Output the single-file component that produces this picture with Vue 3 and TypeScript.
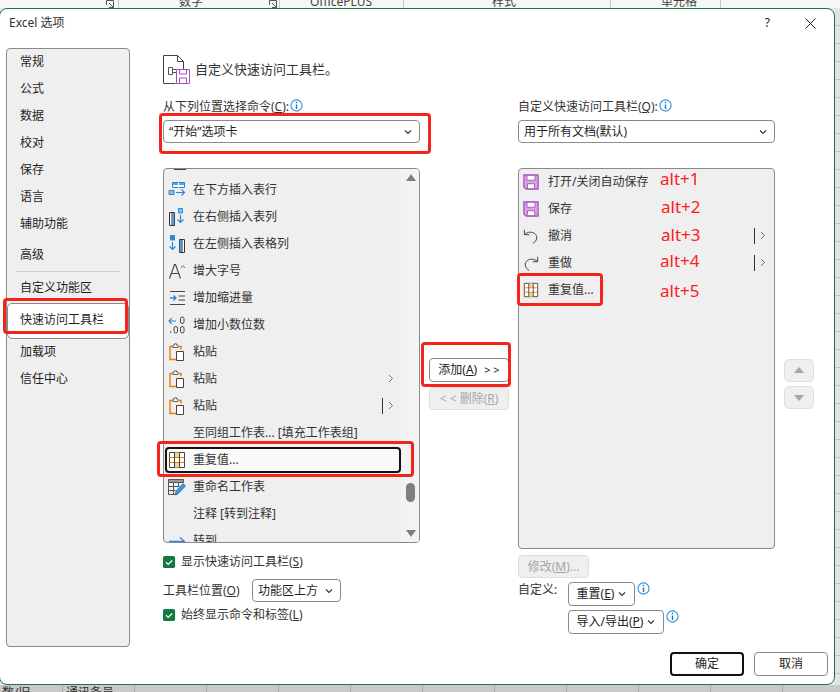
<script setup lang="ts">
interface Row { label: string; icon?: string; more?: 'plain' | 'split'; selected?: boolean }

const navTop = ['常规', '公式', '数据', '校对', '保存', '语言', '辅助功能']

const commands: Row[] = [
  { label: '在下方插入表行', icon: 'i-row' },
  { label: '在右侧插入表列', icon: 'i-colr' },
  { label: '在左侧插入表格列', icon: 'i-coll' },
  { label: '增大字号', icon: 'i-font' },
  { label: '增加缩进量', icon: 'i-indent' },
  { label: '增加小数位数', icon: 'i-dec' },
  { label: '粘贴', icon: 'i-paste' },
  { label: '粘贴', icon: 'i-paste', more: 'plain' },
  { label: '粘贴', icon: 'i-paste', more: 'split' },
  { label: '至同组工作表... [填充工作表组]' },
  { label: '重复值...', icon: 'i-dup', selected: true },
  { label: '重命名工作表', icon: 'i-rename' },
  { label: '注释 [转到注释]' },
  { label: '转到', icon: 'i-goto' },
]

const quick: Row[] = [
  { label: '打开/关闭自动保存', icon: 'i-save' },
  { label: '保存', icon: 'i-save' },
  { label: '撤消', icon: 'i-undo', more: 'split' },
  { label: '重做', icon: 'i-redo', more: 'split' },
  { label: '重复值...', icon: 'i-dup' },
]

const notes = [
  { text: 'alt+1', x: 660, y: 168 },
  { text: 'alt+2', x: 661, y: 196 },
  { text: 'alt+3', x: 661, y: 224 },
  { text: 'alt+4', x: 660, y: 250 },
  { text: 'alt+5', x: 660, y: 280 },
]
const marks = [
  { x: 159, y: 113, w: 272, h: 41 },
  { x: 3, y: 298, w: 125, h: 36 },
  { x: 421, y: 342, w: 90, h: 45 },
  { x: 157, y: 441, w: 257, h: 36 },
  { x: 517, y: 273, w: 86, h: 33 },
]
const gridLines = [118, 279, 403, 610, 720]
const launchers = [106, 269]
const bottomLines = [62, 134, 206, 278, 350, 422, 494, 566, 638, 710, 782]
</script>

<template>
  <div class="page">
    <svg class="defs" width="0" height="0" aria-hidden="true">
      <defs>
        <symbol id="i-row" viewBox="0 0 18 18">
          <path d="M4.500 1.500h12v5h-12z" fill="#fff" stroke="#2b88d8"/>
          <path d="M4.500 1.500h12v2.500h-12z" fill="#2b88d8" opacity=".75"/>
          <path d="M10.500 1.500v5" stroke="#fff"/>
          <path d="M1 9.500h5v4h-5z" fill="#8cc0ea" stroke="#2b88d8"/>
          <path d="M8 11.500h8M13.500 8.500l3 3-3 3" fill="none" stroke="#2b88d8" stroke-width="1.200"/>
        </symbol>
        <symbol id="i-colr" viewBox="0 0 18 18">
          <path d="M1.500 4.500h5v13h-5zM4 4.500v13" fill="#fff" stroke="#333"/>
          <path d="M4.500 5h2v12h-2z" fill="#2b88d8" opacity=".8"/>
          <path d="M10.500.5h4v4.500h-4z" fill="#8cc0ea" stroke="#2b88d8"/>
          <path d="M12.500 7v7.500M9.500 11.500l3 3 3-3" fill="none" stroke="#2b88d8" stroke-width="1.200"/>
        </symbol>
        <symbol id="i-coll" viewBox="0 0 18 18">
          <path d="M11.500 4.500h5v13h-5zM14 4.500v13" fill="#fff" stroke="#333"/>
          <path d="M11.500 5h2.500v12h-2.500z" fill="#2b88d8" opacity=".8"/>
          <path d="M2.500.5h4v4.500h-4z" fill="#2b88d8" stroke="#2b88d8"/>
          <path d="M4.500 7v7.500M1.500 11.500l3 3 3-3" fill="none" stroke="#2b88d8" stroke-width="1.200"/>
        </symbol>
        <symbol id="i-font" viewBox="0 0 18 18">
          <path d="M1.500 16.500L6.500 2.500h1l5 14M3.300 11.500h7.400" fill="none" stroke="#444" stroke-width="1.100"/>
          <path d="M13 6l2-2.500L17 6" fill="none" stroke="#2b88d8" stroke-width="1"/>
        </symbol>
        <symbol id="i-indent" viewBox="0 0 18 18">
          <path d="M2 2.500h15M10.500 7h6.500M10.500 11h6.500M2 15.500h15" fill="none" stroke="#444"/>
          <path d="M2 9h6M5.500 6.500L8 9l-2.500 2.500" fill="none" stroke="#2b88d8" stroke-width="1.300"/>
        </symbol>
        <symbol id="i-dec" viewBox="0 0 18 18">
          <path d="M1 5h7M3.800 2.200L1 5l2.800 2.800" fill="none" stroke="#2b88d8" stroke-width="1.200"/>
          <rect x="12.500" y="1" width="3.500" height="6.500" rx="1.700" fill="none" stroke="#444"/>
          <path d="M2 15.500h1.300v1.300H2z" fill="#444"/>
          <rect x="6" y="10.500" width="3.500" height="6.500" rx="1.700" fill="none" stroke="#444"/>
          <rect x="12.500" y="10.500" width="3.500" height="6.500" rx="1.700" fill="none" stroke="#444"/>
        </symbol>
        <symbol id="i-paste" viewBox="0 0 18 18">
          <path d="M2 3.500h3M11 3.500h2v3M2 3v13.500h6" fill="none" stroke="#e87d0d" stroke-width="1.400"/>
          <path d="M5 3.500V2h1.500V.8h2V2H10v2.500H5z" fill="#fff" stroke="#555" stroke-width=".9"/>
          <path d="M8.500 8.500h7v9h-7z" fill="#fff" stroke="#444"/>
        </symbol>
        <symbol id="i-dup" viewBox="0 0 18 18">
          <path d="M1.500 1.500h15v15h-15z" fill="#fff" stroke="#444"/>
          <path d="M6.500 1.500h5v15h-5z" fill="#fbd08f"/>
          <path d="M6.500 6.500h5v5h-5z" fill="#fff"/>
          <path d="M1.500 6.500h15M1.500 11.500h15" stroke="#e87d0d"/>
          <path d="M6.500 1.500v15M11.500 1.500v15" stroke="#444"/>
        </symbol>
        <symbol id="i-rename" viewBox="0 0 18 18">
          <path d="M.5 1.500h15v3h-15z" fill="#999" stroke="#555"/>
          <path d="M.5 4.500v12h9M5.500 4.500v12M10.500 4.500v4M.5 8.500h11M.5 12.500h7" fill="none" stroke="#555"/>
          <path d="M7 17l1-4 7-7.500 2.500 2.500-7 7.500z" fill="#3a96dd" stroke="#1f6fb2" stroke-width=".7"/>
        </symbol>
        <symbol id="i-goto" viewBox="0 0 18 18">
          <path d="M1 9.500h15M12 5.500l4.500 4-4.500 4" fill="none" stroke="#2b88d8" stroke-width="1.300"/>
        </symbol>
        <symbol id="i-save" viewBox="0 0 18 18">
          <path d="M1 1h16v16H3.500L1 14.500z" fill="#d5a3e2" stroke="#a54fbb" stroke-width="1.400"/>
          <path d="M4.500 1.500h9v5.500h-9zM5 11h8v5.500H5z" fill="#fff" stroke="#a54fbb"/>
        </symbol>
        <symbol id="i-undo" viewBox="0 0 18 18">
          <path d="M1.500 2v5.500H7M1.800 7.300C5 4 10.500 4 13.500 6.500c3 2.700 2.500 6.500-.5 9.500l-2 1.500" fill="none" stroke="#444" stroke-width="1.100"/>
        </symbol>
        <symbol id="i-redo" viewBox="0 0 18 18">
          <path d="M16.500 2v5.500H11M16.200 7.300C13 4 7.500 4 4.500 6.500c-3 2.700-2.500 6.500.5 9.500l2 1.500" fill="none" stroke="#444" stroke-width="1.100"/>
        </symbol>
        <symbol id="i-info" viewBox="0 0 14 14">
          <circle cx="7" cy="7" r="6" fill="#fff" stroke="#2b93d8" stroke-width="1.200"/>
          <path d="M6.200 3h1.600v1.600H6.200zM6.200 5.800h1.600v5H6.200z" fill="#1f7fc4"/>
        </symbol>
        <symbol id="i-chev" viewBox="0 0 8 6">
          <path d="M1 1.500L4 4.500 7 1.500" fill="none" stroke="#333" stroke-width="1.100"/>
        </symbol>
        <symbol id="i-right" viewBox="0 0 8 12">
          <path d="M1.500 1.500L6 6 1.500 10.500" fill="none" stroke="#444" stroke-width="1"/>
        </symbol>
        <symbol id="i-check" viewBox="0 0 14 14">
          <rect width="13" height="13" rx="2" fill="#107c41"/>
          <path d="M3.300 6.800l2.300 2.300 4.300-4.300" fill="none" stroke="#fff" stroke-width="1.400"/>
        </symbol>
      </defs>
    </svg>

    <div class="sheet-top">
      <span class="top-label t1">数字</span>
      <span class="top-label t2">OfficePLUS</span>
      <span class="top-label t3">样式</span>
      <span class="top-label t4">单元格</span>
      <i v-for="x in gridLines" :key="x" class="top-line" :style="{ left: x + 'px' }"></i>
      <svg v-for="x in launchers" :key="'l' + x" class="launcher" :style="{ left: x + 'px' }" width="8" height="8" viewBox="0 0 8 8">
        <path d="M.5 5V.5H7.500V7.500H3M3 3l4 4M4.500 7.500h3V4.500" fill="none" stroke="#555"/>
      </svg>
    </div>

    <div class="middle">
      <section class="dialog">
        <header class="title-bar">
          <span class="title">Excel 选项</span>
          <span class="help">?</span>
          <svg class="close" width="11" height="11" viewBox="0 0 11 11"><path d="M.5.500l10 10M10.500.500l-10 10" stroke="#222" fill="none"/></svg>
        </header>

        <div class="body">
          <nav class="side">
            <div v-for="n in navTop" :key="n" class="nav-item">{{ n }}</div>
            <div class="nav-item nav-gap">高级</div>
            <div class="nav-divider"></div>
            <div class="nav-item nav-custom">自定义功能区</div>
            <div class="nav-item nav-active">快速访问工具栏</div>
            <div class="nav-item">加载项</div>
            <div class="nav-item">信任中心</div>
          </nav>

          <main class="main">
            <div class="heading">
              <svg class="heading-icon" width="28" height="31" viewBox="0 0 28 31">
                <path d="M.5 1.500h14l6 6v8M20.500 7.500h-6v-6M.5 1.500v28h12" fill="none" stroke="#444"/>
                <path d="M5.500 13.500h4v7h-4zM9.500 15.500h4M9.500 18.500h4" fill="none" stroke="#555"/>
                <path d="M13.500 15.500h13v14h-13z" fill="#fff" stroke="#a74fbd"/>
                <path d="M16.500 16v4h7v-4M16.500 29v-5h7v5" fill="none" stroke="#a74fbd"/>
              </svg>
              <span class="heading-text">自定义快速访问工具栏。</span>
            </div>

            <div class="columns">
              <div class="col">
                <div class="field-label">
                  从下列位置选择命令(<u>C</u>):
                  <svg class="info" width="13" height="13"><use href="#i-info"/></svg>
                </div>
                <div class="select">
                  <span>“开始”选项卡</span>
                  <svg width="8" height="6"><use href="#i-chev"/></svg>
                </div>
                <div class="list left-list">
                  <div class="rows">
                    <i class="clip-mark"></i>
                    <div v-for="(r, i) in commands" :key="i" class="row" :class="{ selected: r.selected }">
                      <svg v-if="r.icon" class="row-icon" width="18" height="18"><use :href="'#' + r.icon"/></svg>
                      <span v-else class="row-icon"></span>
                      <span class="row-label">{{ r.label }}</span>
                      <span v-if="r.more === 'split'" class="split-bar"></span>
                      <svg v-if="r.more" class="row-more" width="6" height="9"><use href="#i-right"/></svg>
                    </div>
                  </div>
                  <div class="scroll">
                    <span class="tri up"></span>
                    <span class="thumb"></span>
                    <span class="tri down"></span>
                  </div>
                </div>
              </div>

              <div class="move">
                <button class="btn add"><span>添加(<u>A</u>)</span><span class="angle">&gt; &gt;</span></button>
                <button class="btn off remove"><span>&lt; &lt; 删除(<u>R</u>)</span></button>
              </div>

              <div class="col">
                <div class="field-label">
                  自定义快速访问工具栏(<u>Q</u>):
                  <svg class="info" width="13" height="13"><use href="#i-info"/></svg>
                </div>
                <div class="select">
                  <span>用于所有文档(默认)</span>
                  <svg width="8" height="6"><use href="#i-chev"/></svg>
                </div>
                <div class="list right-list">
                  <div v-for="(r, i) in quick" :key="i" class="row qrow">
                    <svg class="row-icon" width="16" height="16"><use :href="'#' + r.icon"/></svg>
                    <span class="row-label">{{ r.label }}</span>
                    <span v-if="r.more" class="split-bar"></span>
                    <svg v-if="r.more" class="row-more" width="6" height="9"><use href="#i-right"/></svg>
                  </div>
                </div>
              </div>

              <div class="order">
                <button class="btn off order-btn"><span class="tri small up"></span></button>
                <button class="btn off order-btn"><span class="tri small down"></span></button>
              </div>
            </div>

            <div class="lower">
              <div class="lower-left">
                <label class="check-line">
                  <svg width="13" height="13"><use href="#i-check"/></svg>
                  <span>显示快速访问工具栏(<u>S</u>)</span>
                </label>
                <div class="pos-line">
                  <span class="pos-label">工具栏位置(<u>O</u>)</span>
                  <div class="select pos">
                    <span>功能区上方</span>
                    <svg width="8" height="6"><use href="#i-chev"/></svg>
                  </div>
                </div>
                <label class="check-line">
                  <svg width="13" height="13"><use href="#i-check"/></svg>
                  <span>始终显示命令和标签(<u>L</u>)</span>
                </label>
              </div>

              <div class="lower-right">
                <button class="btn off modify"><span>修改(<u>M</u>)...</span></button>
                <div class="custom-line">
                  <span class="custom-label">自定义:</span>
                  <div class="custom-btns">
                    <div class="btn-info">
                      <button class="btn reset"><span>重置(<u>E</u>)</span><svg width="8" height="6"><use href="#i-chev"/></svg></button>
                      <svg class="info" width="13" height="13"><use href="#i-info"/></svg>
                    </div>
                    <div class="btn-info">
                      <button class="btn export"><span>导入/导出(<u>P</u>)</span><svg width="8" height="6"><use href="#i-chev"/></svg></button>
                      <svg class="info" width="13" height="13"><use href="#i-info"/></svg>
                    </div>
                  </div>
                </div>
              </div>
            </div>
          </main>
        </div>

        <footer class="actions">
          <button class="btn action primary">确定</button>
          <button class="btn action">取消</button>
        </footer>
      </section>
      <div class="sheet-right"></div>
    </div>

    <div class="sheet-bottom">
      <span class="b-text b1">数/旧</span>
      <span class="b-text b2">通讯条员</span>
      <i v-for="x in bottomLines" :key="x" class="bottom-line" :style="{ left: x + 'px' }"></i>
    </div>

    <i v-for="(m, i) in marks" :key="'m' + i" class="mark"
       :style="{ left: m.x + 'px', top: m.y + 'px', width: m.w + 'px', height: m.h + 'px' }"></i>
    <span v-for="n in notes" :key="n.text" class="note"
          :style="{ left: n.x + 'px', top: n.y + 'px' }">{{ n.text }}</span>
  </div>
</template>

<style>
html, body { margin: 0; background: #fff; }
</style>

<style scoped>
.page {
  position: relative;
  width: 840px;
  height: 692px;
  overflow: hidden;
  background: #e6e6e6;
  color: #1f1f1f;
  font: 12px/16px "Noto Sans", "Noto Sans CJK SC", sans-serif;
}
.defs { position: absolute; }
u { text-underline-offset: 1px; }

.sheet-top {
  position: relative;
  height: 8px;
  background: #f6f6f6;
  overflow: hidden;
}
.top-label { position: absolute; top: -6px; color: #444; }
.t1 { left: 179px; }
.t2 { left: 310px; }
.t3 { left: 492px; }
.t4 { left: 661px; }
.top-line { position: absolute; top: 0; bottom: 0; width: 1px; background: #c8c8c8; }
.launcher { position: absolute; top: 0; }

.middle { display: flex; height: 677px; }
.dialog {
  box-sizing: border-box;
  width: 836px;
  height: 677px;
  margin-left: -1px;
  display: flex;
  flex-direction: column;
  flex: none;
  background: #fff;
  border: 1px solid #107c41;
  border-radius: 8px;
  position: relative;
  z-index: 1;
}
.sheet-right {
  flex: 1;
  background: repeating-linear-gradient(to bottom, #e4e4e4 0 17px, #c4c4c4 17px 18px);
}
.title-bar {
  height: 39px;
  flex: none;
  display: flex;
  align-items: center;
  padding: 0 18px 11px 9px;
  box-sizing: border-box;
}
.title { flex: 1; color: #333; }
.help { margin-right: 35px; font-size: 12px; color: #222; }

.body { flex: 1; display: flex; min-height: 0; }
.side {
  box-sizing: border-box;
  width: 124px;
  height: 599px;
  margin-left: 6px;
  background: #efefef;
  border: 1px solid #8a8a8a;
  border-radius: 4px;
  flex: none;
}
.nav-item { height: 27px; line-height: 25px; padding-left: 13px; }
.nav-gap { margin-top: 4px; }
.nav-divider { height: 1px; margin: 2px 9px 0; background: #cfcfcf; }
.nav-custom { margin-top: 3px; }
.nav-active {
  box-sizing: border-box;
  height: 36px;
  line-height: 32px;
  margin-top: 1px;
  background: #fff;
  border: 1px solid #8a8a8a;
  border-radius: 5px;
  padding-left: 12px;
}

.main { margin-left: 33px; flex: 1; min-width: 0; }
.heading { display: flex; align-items: center; height: 31px; margin-top: 6px; }
.heading-icon { flex: none; }
.heading-text { margin: 0 0 2px 4px; font-size: 13px; color: #333; }

.columns { display: flex; margin-top: 11px; }
.col { width: 257px; flex: none; }
.field-label { height: 24px; line-height: 21px; color: #333; white-space: nowrap; }
.info { vertical-align: -1px; margin-left: -2px; }

.select {
  box-sizing: border-box;
  display: flex;
  align-items: center;
  justify-content: space-between;
  height: 23px;
  background: #fff;
  border: 1px solid #8a8a8a;
  border-radius: 4px;
  padding: 0 7px 0 5px;
}
.list {
  box-sizing: border-box;
  margin-top: 25px;
  background: #efefef;
  border: 1px solid #8a8a8a;
  border-radius: 4px;
  overflow: hidden;
}
.left-list { height: 375px; display: flex; }
.rows { flex: 1; min-width: 0; padding: 7px 0 0 1px; position: relative; overflow: hidden; }
.clip-mark { position: absolute; left: 10px; top: 0; width: 12px; height: 1px; background: #444; }
.row { display: flex; align-items: center; height: 27px; box-sizing: border-box; padding-left: 3px; }
.row-icon { flex: none; width: 18px; height: 18px; display: block; }
.row-label { margin-left: 7px; flex: 1; white-space: nowrap; color: #333; }
.selected {
  height: 26px;
  margin-top: 1px;
  background: #fafafa;
  border: 2px solid #111;
  border-radius: 4px;
  padding-left: 1px;
}
.split-bar { width: 1px; height: 16px; background: #333; margin-right: 5px; }
.row-more { margin-right: 7px; flex: none; }
.scroll {
  width: 18px;
  flex: none;
  position: relative;
  background: #f3f3f3;
}
.thumb {
  position: absolute;
  left: 5px;
  top: 314px;
  width: 9px;
  height: 19px;
  border-radius: 5px;
  background: #7f7f7f;
}
.tri { position: absolute; left: 5px; width: 0; height: 0; border-left: 5px solid transparent; border-right: 5px solid transparent; }
.tri.up { top: 5px; border-bottom: 7px solid #7f7f7f; }
.tri.down { bottom: 5px; border-top: 7px solid #7f7f7f; }

.move { width: 98px; flex: none; padding: 262px 0 0 9px; box-sizing: border-box; }
.btn {
  box-sizing: border-box;
  display: flex;
  align-items: center;
  justify-content: center;
  background: #fff;
  border: 1px solid #8a8a8a;
  border-radius: 4px;
  padding: 0;
  color: #222;
  font: inherit;
  white-space: nowrap;
}
.btn.off { background: #efefef; border-color: #dedede; color: #a6a6a6; }
.add { width: 80px; height: 24px; }
.angle { margin-left: 7px; font-size: 11px; }
.remove { width: 80px; height: 23px; margin-top: 5px; }

.right-list { height: 381px; }
.qrow { padding-left: 4px; }
.qrow:first-child { margin-top: -1px; }
.qrow .row-icon { width: 16px; height: 16px; }
.qrow .row-label { margin-left: 9px; }
.qrow .row-more { margin-right: 8px; }

.order { width: 30px; margin-left: 9px; padding-top: 263px; flex: none; }
.order-btn { position: relative; width: 30px; height: 23px; margin-bottom: 4px; border-radius: 5px; }
.tri.small { left: 9px; }
.tri.small.up { top: 7px; border-bottom: 6px solid #a6a6a6; }
.tri.small.down { top: 8px; bottom: auto; border-top: 6px solid #a6a6a6; }

.lower { display: flex; margin-top: 1px; }
.lower-left { width: 355px; padding-top: 4px; flex: none; }
.check-line { display: flex; align-items: center; height: 16px; color: #333; }
.check-line span { margin-left: 5px; }
.pos-line { display: flex; align-items: center; margin: 9px 0 5px; }
.pos-label { width: 89px; color: #333; }
.pos { width: 89px; }

.lower-right { width: 257px; padding-top: 5px; }
.modify { width: 71px; height: 23px; }
.custom-line { display: flex; margin-top: 4px; }
.custom-label { width: 50px; line-height: 16px; color: #333; }
.custom-btns { display: flex; flex-direction: column; gap: 4px; }
.btn-info { display: flex; align-items: flex-start; }
.btn-info .info { margin: 0 0 0 2px; }
.reset { width: 67px; height: 24px; gap: 4px; }
.export { width: 96px; height: 24px; gap: 4px; }

.actions {
  display: flex;
  justify-content: flex-end;
  gap: 10px;
  padding: 0 6px 0 0;
  flex: none;
  height: 32px;
  box-sizing: border-box;
}
.action { width: 74px; height: 24px; }
.primary { border: 2px solid #111; }

.sheet-bottom {
  position: relative;
  height: 7px;
  background: #c9c9c9;
  overflow: hidden;
}
.b-text { position: absolute; top: 0; color: #333; }
.b1 { left: 2px; }
.b2 { left: 66px; }
.bottom-line { position: absolute; top: 0; bottom: 0; width: 1px; background: #a9a9a9; }

.mark {
  position: absolute;
  box-sizing: border-box;
  border: 3px solid #f5231c;
  border-radius: 4px;
  z-index: 3;
}
.note {
  position: absolute;
  z-index: 3;
  font: 17px/22px "Noto Sans", sans-serif;
  color: #fb2020;
  white-space: nowrap;
}
</style>
